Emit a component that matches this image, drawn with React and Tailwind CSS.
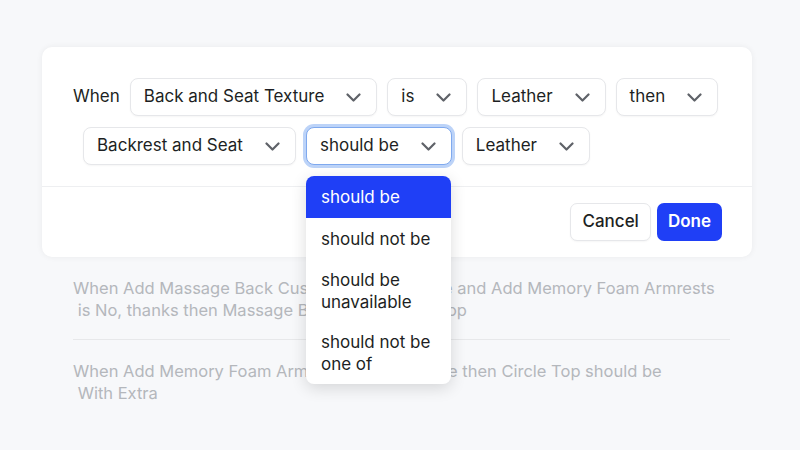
import React from "react";

const Chevron = () => (
  <svg width="15" height="9" viewBox="0 0 15 9" fill="none" className="shrink-0">
    <path d="M1.5 1.5 7.5 7.5 13.5 1.5" stroke="#5f6268" strokeWidth="2.2" strokeLinecap="round" strokeLinejoin="round" />
  </svg>
);

function Select({ label, focused, children }) {
  return (
    <div className="relative ml-[10px] mb-[11px]">
      <div
        className={
          focused
            ? "flex h-[38px] items-center gap-[22px] rounded-[8px] border border-[#7fa9ee] bg-white pl-[13px] pr-[15px] ring-[3px] ring-[#bcd3f8]"
            : "flex h-[38px] items-center gap-[22px] rounded-[8px] border border-[#e6e7ea] bg-white pl-[13px] pr-[15px] shadow-[0_1px_2px_rgba(0,0,0,0.04)]"
        }
      >
        <span className="text-[17px] text-[#1d1f23]">{label}</span>
        <Chevron />
      </div>
      {children}
    </div>
  );
}

const options = [
  { label: "should be", active: true },
  { label: "should not be" },
  { label: "should be unavailable", multi: true },
  { label: "should not be one of", multi: true },
];

export default function App() {
  return (
    <div
      className="min-h-[450px] bg-[#f7f8fa] pl-[42px] pr-[48px] pt-[47px]"
      style={{ fontFamily: "Inter, 'Noto Sans', sans-serif" }}
    >
      <div className="relative z-10 rounded-[10px] bg-white shadow-[0_0_6px_rgba(0,0,0,0.06)]">
        <div className="flex flex-wrap items-center pl-[31px] pr-[20px] pt-[31px] pb-[10px]">
          <span className="mb-[11px] text-[17px] text-[#1d1f23]">When</span>
          <Select label="Back and Seat Texture" />
          <Select label="is" />
          <Select label="Leather" />
          <Select label="then" />
          <Select label="Backrest and Seat" />
          <Select label="should be" focused>
            <div className="absolute left-0 top-[49px] w-[145px] overflow-hidden rounded-[8px] bg-white shadow-[0_4px_16px_rgba(0,0,0,0.14)]">
              {options.map((o) => (
                <div
                  key={o.label}
                  className={
                    (o.multi ? "py-[9px] " : "py-[10px] ") +
                    (o.active
                      ? "bg-[#1f3ff6] px-[15px] text-[17px] leading-[22px] text-white"
                      : "px-[15px] text-[17px] leading-[22px] text-[#1d1f23]")
                  }
                >
                  {o.label}
                </div>
              ))}
            </div>
          </Select>
          <Select label="Leather" />
        </div>
        <div className="flex justify-end gap-[6px] border-t border-[#eeeff1] pt-[16px] pb-[16px] pr-[30px]">
          <button className="h-[38px] rounded-[7px] border border-[#e6e7ea] bg-white px-[11px] text-[17px] font-medium text-[#1d1f23] shadow-[0_1px_2px_rgba(0,0,0,0.04)]">
            Cancel
          </button>
          <button className="h-[38px] rounded-[7px] bg-[#1f3ff6] px-[11px] text-[17px] font-semibold text-white">
            Done
          </button>
        </div>
      </div>
      <div className="pl-[31px] pr-[22px] text-[16.5px] leading-[22px] text-[#b4b7bc]">
        <div className="border-b border-[#e7e8ea] pt-[20px] pb-[18px]">
          When Add Massage Back Cushion is Yes, please and Add Memory Foam Armrests {"\u00a0is\u00a0No,"} thanks then Massage Backrest is Circle Top
        </div>
        <div className="pt-[20px] pb-[18px]">
          When Add Memory Foam Armrests is Yes, please then Circle Top should be {"\u00a0With\u00a0Extra"}
        </div>
      </div>
    </div>
  );
}
